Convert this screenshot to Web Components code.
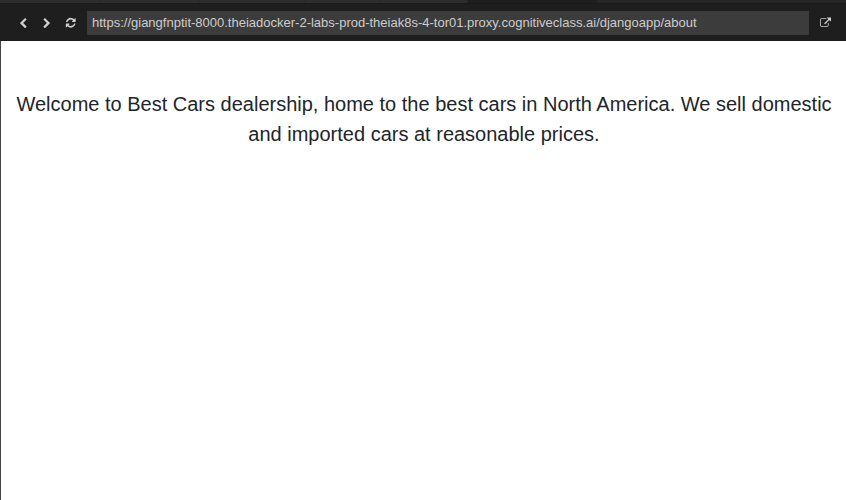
<!DOCTYPE html>
<html lang="en"><head><meta charset="utf-8"><title>About</title>
<style>html,body{margin:0;height:100%;overflow:hidden;background:#fff}</style></head>
<body>
<preview-window>
  <tab-strip slot="tabs"></tab-strip>
  <browser-toolbar slot="toolbar">https://giangfnptit-8000.theiadocker-2-labs-prod-theiak8s-4-tor01.proxy.cognitiveclass.ai/djangoapp/about</browser-toolbar>
  <about-message>Welcome to Best Cars dealership, home to the best cars in North America. We sell domestic and imported cars at reasonable prices.</about-message>
</preview-window>
<script>
function define(name, html) {
  customElements.define(name, class extends HTMLElement {
    constructor() { super(); this.attachShadow({mode: 'open'}).innerHTML = html; }
  });
}
const icons = {
  left: ['60 0 1792 1792', 'M1427 301l-531 531 531 531q19 19 19 45t-19 45l-166 166q-19 19-45 19t-45-19l-742-742q-19-19-19-45t19-45l742-742q19-19 45-19t45 19l166 166q19 19 19 45t-19 45z'],
  right: ['-60 0 1792 1792', 'M1363 877l-742 742q-19 19-45 19t-45-19l-166-166q-19-19-19-45t19-45l531-531-531-531q-19-19-19-45t19-45l166-166q19-19 45-19t45 19l742 742q19 19 19 45t-19 45z'],
  refresh: ['0 0 1792 1792', 'M1639 1056q0 5-1 7-64 268-268 434.5t-478 166.5q-146 0-282.5-55t-243.5-157l-129 129q-19 19-45 19t-45-19-19-45v-448q0-26 19-45t45-19h448q26 0 45 19t19 45-19 45l-137 137q71 66 161 102t187 36q134 0 250-65t186-179q11-17 53-117 8-23 30-23h192q13 0 22.5 9.5t9.5 22.5zm25-800v448q0 26-19 45t-45 19h-448q-26 0-45-19t-19-45 19-45l138-138q-148-137-349-137-134 0-250 65t-186 179q-11 17-53 117-8 23-30 23h-199q-13 0-22.5-9.5t-9.5-22.5v-7q65-268 270-434.5t480-166.5q146 0 284 55.500t245 156.500l130-129q19-19 45-19t45 19 19 45z'],
  external: ['0 -64 1792 1792', 'M1408 928v320q0 119-84.500 203.500t-203.500 84.500h-832q-119 0-203.500-84.500t-84.500-203.500v-832q0-119 84.500-203.500t203.500-84.500h704q14 0 23 9t9 23v64q0 14-9 23t-23 9h-704q-66 0-113 47t-47 113v832q0 66 47 113t113 47h832q66 0 113-47t47-113v-320q0-14 9-23t23-9h64q14 0 23 9t9 23zm384-864v512q0 26-19 45t-45 19-45-19l-176-176-652 652q-10 10-23 10t-23-10l-114-114q-10-10-10-23t10-23l652-652-176-176q-19-19-19-45t19-45 45-19h512q26 0 45 19t19 45z']
};
customElements.define('tool-icon', class extends HTMLElement {
  connectedCallback() {
    const [box, path] = icons[this.getAttribute('name')];
    this.attachShadow({mode: 'open'}).innerHTML =
      `<style>:host{display:flex;justify-content:center;align-items:center}svg{width:11px;height:11px;fill:#d0d0d0}:host([name=refresh]) svg{width:11.500px;height:11.500px}</style><svg viewBox="${box}"><path d="${path}"/></svg>`;
  }
});
define('tab-strip', `<style>
:host{display:grid;grid-template-columns:101px 98px 107px 75px 87px 129px 1fr;height:3px;background:#252526}
i{background:#2d2d2d;border-right:1px solid #252526}
.active{background:#1e1e1e;border:0}.rest{background:#252526;border:0}
</style><i></i><i></i><i></i><i></i><i></i><i class="active"></i><i class="rest"></i>`);
define('browser-toolbar', `<style>
:host{display:grid;grid-template-columns:22px 25px 24px 726px 32px;height:38px;box-sizing:border-box;padding:8px 0 6px 12px;background:linear-gradient(#1a1a1a 0 1px,#1e1e1e 1px)}
.url{margin-left:4px;background:#3c3c3c;color:#ccc;font:13px/24px "Liberation Sans",Arial,sans-serif;padding-left:5px;white-space:nowrap}
tool-icon[name=external]{padding-bottom:1px}
</style><tool-icon name="left"></tool-icon><tool-icon name="right"></tool-icon><tool-icon name="refresh"></tool-icon><div class="url"><slot></slot></div><tool-icon name="external"></tool-icon>`);
define('about-message', `<style>
:host{display:block;padding:48px 10px 0 11px;text-align:center;color:#212529;font:20px/30px "Liberation Sans",Arial,sans-serif}
</style><slot></slot>`);
define('preview-window', `<style>
:host{display:flex;flex-direction:column;height:100vh}
main{flex:1;border-left:1px solid #444;background:#fff}
</style><slot name="tabs"></slot><slot name="toolbar"></slot><main><slot></slot></main>`);
</script></body></html>
